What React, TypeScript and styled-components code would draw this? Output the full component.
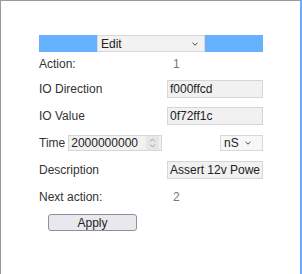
import styled, { createGlobalStyle } from 'styled-components';

const GlobalStyle = createGlobalStyle`
  html, body {
    margin: 0;
    padding: 0;
    background: #ffffff;
  }
  body {
    font-family: "Liberation Sans", Arial, sans-serif;
  }
`;

const Panel = styled.div`
  box-sizing: border-box;
  width: 302px;
  height: 274px;
  border-top: 1px solid #9a9a9a;
  border-left: 1px solid #9a9a9a;
  border-right: 2px solid #66b0fa;
  padding: 34px 0 0 38px;
`;

const Form = styled.div`
  width: 224px;
  display: flex;
  flex-direction: column;
  font-size: 12px;
  color: #333333;
`;

const ModeBar = styled.div`
  height: 17px;
  background: #66b2ff;
  display: flex;
  justify-content: center;
`;

const SelectWrap = styled.div<{ $w: number; $push?: boolean }>`
  position: relative;
  display: inline-flex;
  width: ${(p) => p.$w}px;
  margin-left: ${(p) => (p.$push ? 'auto' : '0')};
`;

const PlainSelect = styled.select<{ $h: number; $bg: string }>`
  appearance: none;
  -webkit-appearance: none;
  box-sizing: border-box;
  width: 100%;
  height: ${(p) => p.$h}px;
  margin: 0;
  padding: 0 0 0 3px;
  font-family: "Liberation Sans", Arial, sans-serif;
  font-size: 12px;
  color: #222222;
  background: ${(p) => p.$bg};
  border: 1px solid #d8d8d8;
  border-radius: 0;
  outline: none;
`;

const Chevron = styled.svg<{ $right: number }>`
  position: absolute;
  right: ${(p) => p.$right}px;
  top: 50%;
  margin-top: -2px;
  width: 6px;
  height: 4px;
  pointer-events: none;
`;

const Row = styled.div<{ $h?: number }>`
  display: flex;
  align-items: center;
  height: ${(p) => p.$h ?? 27}px;
`;

const Label = styled.span`
  width: 128px;
  flex: none;
`;

const Count = styled.span`
  padding-left: 6px;
  color: #777777;
`;

const TextField = styled.input`
  box-sizing: border-box;
  width: 96px;
  height: 18px;
  margin: 0;
  padding: 0 2px;
  font-family: "Liberation Sans", Arial, sans-serif;
  font-size: 12px;
  color: #222222;
  background: #f1f1f1;
  border: 1px solid #d6d6d6;
  border-radius: 0;
  outline: none;
`;

const TimeLabel = styled.span`
  margin-right: 3px;
`;

const NumberWrap = styled.div`
  position: relative;
  display: inline-flex;
  width: 94px;
`;

const NumberField = styled(TextField)`
  width: 94px;
  height: 16px;
  padding-right: 18px;
  -moz-appearance: textfield;
  &::-webkit-inner-spin-button,
  &::-webkit-outer-spin-button {
    -webkit-appearance: none;
    margin: 0;
  }
`;

const Spinner = styled.svg`
  position: absolute;
  right: 3px;
  top: 1px;
  width: 13px;
  height: 14px;
  pointer-events: none;
`;

const ApplyButton = styled.button`
  box-sizing: border-box;
  width: 89px;
  height: 17px;
  margin: 4px 0 0 9px;
  padding: 0;
  font-family: "Liberation Sans", Arial, sans-serif;
  font-size: 12px;
  color: #222222;
  background: #e9e9ed;
  border: 1px solid #8f8f9d;
  border-radius: 3px;
`;

const ChevronIcon = ({ right }: { right: number }) => (
  <Chevron $right={right} viewBox="0 0 6 4">
    <path d="M0.5 0.8 L3 3.2 L5.5 0.8" fill="none" stroke="#444" strokeWidth="1" />
  </Chevron>
);

export default function App() {
  return (
    <>
      <GlobalStyle />
      <Panel>
        <Form>
          <ModeBar>
            <SelectWrap $w={108}>
              <PlainSelect $h={17} $bg="#f2f2f2" defaultValue="edit">
                <option value="edit">Edit</option>
                <option value="insert">Insert</option>
                <option value="delete">Delete</option>
              </PlainSelect>
              <ChevronIcon right={7} />
            </SelectWrap>
          </ModeBar>
          <Row $h={23}>
            <Label>Action:</Label>
            <Count>1</Count>
          </Row>
          <Row>
            <Label>IO Direction</Label>
            <TextField defaultValue="f000ffcd" />
          </Row>
          <Row>
            <Label>IO Value</Label>
            <TextField defaultValue="0f72ff1c" />
          </Row>
          <Row>
            <TimeLabel>Time</TimeLabel>
            <NumberWrap>
              <NumberField type="number" defaultValue={2000000000} />
              <Spinner viewBox="0 0 13 14">
                <rect x="0" y="0" width="13" height="14" fill="#e6e6e6" />
                <path d="M4 5.5 L6.5 3 L9 5.5" fill="none" stroke="#999" strokeWidth="0.9" />
                <path d="M4 8.5 L6.5 11 L9 8.5" fill="none" stroke="#999" strokeWidth="0.9" />
              </Spinner>
            </NumberWrap>
            <SelectWrap $w={43} $push>
              <PlainSelect $h={16} $bg="#f7f7f7" defaultValue="ns">
                <option value="ns">nS</option>
                <option value="us">uS</option>
                <option value="ms">mS</option>
              </PlainSelect>
              <ChevronIcon right={12} />
            </SelectWrap>
          </Row>
          <Row>
            <Label>Description</Label>
            <TextField defaultValue="Assert 12v Power" />
          </Row>
          <Row>
            <Label>Next action:</Label>
            <Count>2</Count>
          </Row>
          <ApplyButton>Apply</ApplyButton>
        </Form>
      </Panel>
    </>
  );
}
